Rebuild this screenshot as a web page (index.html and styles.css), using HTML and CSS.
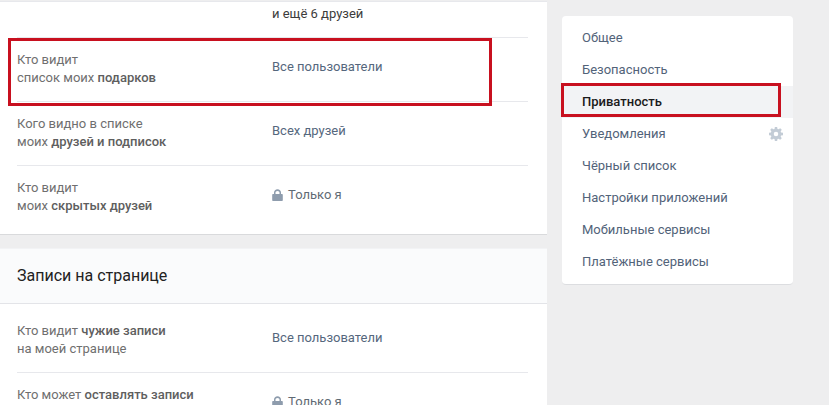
FILE: index.html
```html
<!DOCTYPE html>
<html lang="ru">
<head>
    <meta charset="UTF-8">
    <title>Приватность</title>
    <link rel="stylesheet" href="styles.css">
</head>
<body>
    <div class="page">
        <div class="content">
            <div class="card card-first">
                <div class="row row-cut">
                    <div class="row-label"></div>
                    <div class="row-value row-value-dark">и ещё 6 друзей</div>
                </div>
                <div class="row">
                    <div class="row-label">Кто видит<br>список моих <b>подарков</b></div>
                    <div class="row-value">Все пользователи</div>
                    <div class="mark mark-row"></div>
                </div>
                <div class="row">
                    <div class="row-label">Кого видно в списке<br>моих <b>друзей и подписок</b></div>
                    <div class="row-value">Всех друзей</div>
                </div>
                <div class="row row-last">
                    <div class="row-label">Кто видит<br>моих <b>скрытых друзей</b></div>
                    <div class="row-value row-value-dim">
                        <svg class="lock" width="11" height="12" viewBox="0 0 11 12"><path fill-rule="evenodd" d="M2 5V3.600C2 1.600 3.500.3 5.500.3S9 1.600 9 3.600V5h.8c.6 0 1 .4 1 1v5c0 .6-.4 1-1 1H1.200c-.6 0-1-.4-1-1V6c0-.6.4-1 1-1zm1.500 0h4V3.700c0-1.100-.8-1.800-2-1.800s-2 .7-2 1.800z"/></svg>
                        Только я
                    </div>
                </div>
            </div>
            <div class="card">
                <div class="card-header">Записи на странице</div>
                <div class="row row-first">
                    <div class="row-label">Кто видит <b>чужие записи</b><br>на моей странице</div>
                    <div class="row-value">Все пользователи</div>
                </div>
                <div class="row">
                    <div class="row-label">Кто может <b>оставлять записи</b></div>
                    <div class="row-value row-value-dim">
                        <svg class="lock" width="11" height="12" viewBox="0 0 11 12"><path fill-rule="evenodd" d="M2 5V3.600C2 1.600 3.500.3 5.500.3S9 1.600 9 3.600V5h.8c.6 0 1 .4 1 1v5c0 .6-.4 1-1 1H1.200c-.6 0-1-.4-1-1V6c0-.6.4-1 1-1zm1.500 0h4V3.700c0-1.100-.8-1.800-2-1.800s-2 .7-2 1.800z"/></svg>
                        Только я
                    </div>
                </div>
            </div>
        </div>
        <div class="menu">
            <div class="menu-item">Общее</div>
            <div class="menu-item">Безопасность</div>
            <div class="menu-item active">Приватность<div class="mark mark-menu"></div></div>
            <div class="menu-item">Уведомления
                <svg class="gear" width="14" height="14" viewBox="0 0 16 16"><path fill-rule="evenodd" d="M6.700 0h2.600l.4 2.200 1.200.5 1.900-1.300 1.800 1.800-1.300 1.900.5 1.200 2.200.4v2.600l-2.200.4-.5 1.200 1.300 1.900-1.800 1.800-1.900-1.300-1.200.5-.4 2.200H6.700l-.4-2.200-1.200-.5-1.900 1.300-1.800-1.800 1.300-1.900-.5-1.200L0 9.300V6.700l2.200-.4.5-1.200-1.300-1.900 1.800-1.800 1.900 1.300 1.200-.5zM8 5.400a2.600 2.600 0 1 0 0 5.200 2.600 2.600 0 0 0 0-5.200z"/></svg>
            </div>
            <div class="menu-item">Чёрный список</div>
            <div class="menu-item">Настройки приложений</div>
            <div class="menu-item">Мобильные сервисы</div>
            <div class="menu-item">Платёжные сервисы</div>
        </div>
    </div>
</body>
</html>
```

FILE: styles.css
```css
/* page */
* {
    box-sizing: border-box;
}

html, body {
    height: 100%;
}

body {
    margin: 0;
    background-color: #eeeeef;
    font-family: Roboto, "Open Sans", sans-serif;
    font-size: 13px;
    line-height: 18px;
    overflow: hidden;
}

.page {
    display: flex;
    align-items: flex-start;
    height: 405px;
}

.content {
    width: 547px;
    flex-shrink: 0;
}

/* left cards */
.card {
    background-color: #fff;
    border-bottom: 1px solid #d9dadc;
    margin-bottom: 13px;
}

.card-first {
    border-top: 1px solid #e7e8ec;
    margin-top: 1px;
}

.card-header {
    height: 56px;
    padding: 0 17px;
    display: flex;
    align-items: center;
    background-color: #fafbfc;
    border-top: 1px solid #f2f3f5;
    border-bottom: 1px solid #e3e4e8;
    font-size: 16px;
    color: #222;
}

.row {
    position: relative;
    display: flex;
    align-items: flex-start;
    height: 64px;
    padding-top: 13px;
    margin: 0 19px 0 17px;
    border-bottom: 1px solid #e7e8ec;
}

.row-cut {
    height: 36px;
    padding-top: 3px;
}

.row-cut .row-value {
    margin-top: 0;
}

.row-first {
    height: 69px;
    padding-top: 18px;
}

.row-last {
    height: 68px;
    border-bottom: none;
}

.row-label {
    width: 255px;
    color: #6f6f6f;
}

.row-label b {
    font-weight: 500;
    color: #5e5e5e;
}

.row-value {
    margin-top: 7px;
    color: #55677d;
}

.row-value-dark {
    color: #3c3c3c;
}

.row-value-dim {
    display: flex;
    align-items: center;
    gap: 5px;
    color: #5f6b74;
}

.lock {
    fill: #8e9cad;
}

/* right menu */
.menu {
    position: relative;
    width: 231px;
    margin: 16px 0 0 15px;
    padding: 6px 0;
    background-color: #fff;
    border-radius: 4px;
    border-bottom: 1px solid #dcdde0;
}

.menu-item {
    position: relative;
    display: flex;
    align-items: center;
    justify-content: space-between;
    height: 32px;
    padding: 0 10px 0 20px;
    color: #526379;
}

.menu-item.active {
    background-color: #f2f3f5;
    color: #1a1a1a;
    font-weight: 500;
}

.gear {
    fill: #c3ccd6;
}

/* red annotation frames */
.mark {
    position: absolute;
    border: 3px solid #c8101f;
}

.mark-row {
    top: 0;
    left: -9px;
    width: 484px;
    height: 68px;
}

.mark-menu {
    top: -3px;
    left: -1px;
    width: 220px;
    height: 34px;
}
```
